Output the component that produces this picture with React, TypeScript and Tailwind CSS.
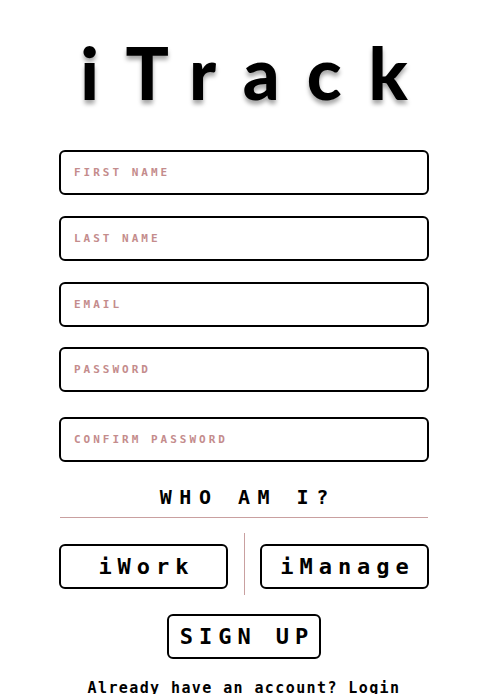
import { useState } from 'react';

const mono = { fontFamily: '"DejaVu Sans Mono", "Liberation Mono", monospace' };

const fields = [
  { name: 'firstName', label: 'FIRST NAME', type: 'text', mt: 'mt-0' },
  { name: 'lastName', label: 'LAST NAME', type: 'text', mt: 'mt-[21px]' },
  { name: 'email', label: 'EMAIL', type: 'email', mt: 'mt-[21px]' },
  { name: 'password', label: 'PASSWORD', type: 'password', mt: 'mt-[20px]' },
  { name: 'confirm', label: 'CONFIRM PASSWORD', type: 'password', mt: 'mt-[25px]' },
];

export default function App() {
  const [role, setRole] = useState<string | null>(null);

  return (
    <div className="min-h-screen bg-white flex flex-col items-center" style={mono}>
      {/* Title */}
      <h1
        className="mt-[28px] h-[88px] text-[72px] leading-[88px] font-black text-black tracking-[27px] pl-[27px] whitespace-nowrap [text-shadow:0_4px_4px_rgba(0,0,0,0.35)]"
        style={{ fontFamily: 'Lato, "Noto Sans", sans-serif' }}
      >
        iTrack
      </h1>

      {/* Form */}
      <form className="mt-[34px] w-[370px] flex flex-col" onSubmit={(e) => e.preventDefault()}>
        {fields.map((f) => (
          <input
            key={f.name}
            name={f.name}
            type={f.type}
            placeholder={f.label}
            className={`${f.mt} h-[45px] w-full border-2 border-black rounded-[6px] px-[13px] text-[11px] font-bold tracking-[3px] text-black placeholder:text-[#c48c8c] outline-none`}
          />
        ))}

        <h2 className="mt-[20px] text-center text-[20px] leading-[30px] font-bold tracking-[7.5px] pl-[7.5px] text-black whitespace-nowrap">
          WHO AM I?
        </h2>
        <div className="mt-[5px] mx-[1px] h-px bg-[#c9a0a0]" />

        <div className="mt-[15px] flex items-center">
          <button
            type="button"
            onClick={() => setRole('work')}
            className={`w-[169px] h-[45px] mt-[4px] border-2 border-black rounded-[6px] text-[22px] font-bold tracking-[6px] pl-[6px] whitespace-nowrap ${role === 'work' ? 'bg-gray-100' : 'bg-white'}`}
          >
            iWork
          </button>
          <div className="mx-auto w-px h-[62px] bg-[#c9a0a0]" />
          <button
            type="button"
            onClick={() => setRole('manage')}
            className={`w-[169px] h-[45px] mt-[4px] border-2 border-black rounded-[6px] text-[22px] font-bold tracking-[6px] pl-[6px] whitespace-nowrap ${role === 'manage' ? 'bg-gray-100' : 'bg-white'}`}
          >
            iManage
          </button>
        </div>

        <button
          type="submit"
          className="mt-[19px] self-center w-[154px] h-[45px] border-2 border-black rounded-[6px] text-[22px] font-bold tracking-[6px] pl-[6px] whitespace-nowrap text-black"
        >
          SIGN UP
        </button>
      </form>

      <p className="mt-[18px] text-[15px] font-bold tracking-[1.4px] text-black whitespace-nowrap">
        Already have an account? Login
      </p>
    </div>
  );
}
